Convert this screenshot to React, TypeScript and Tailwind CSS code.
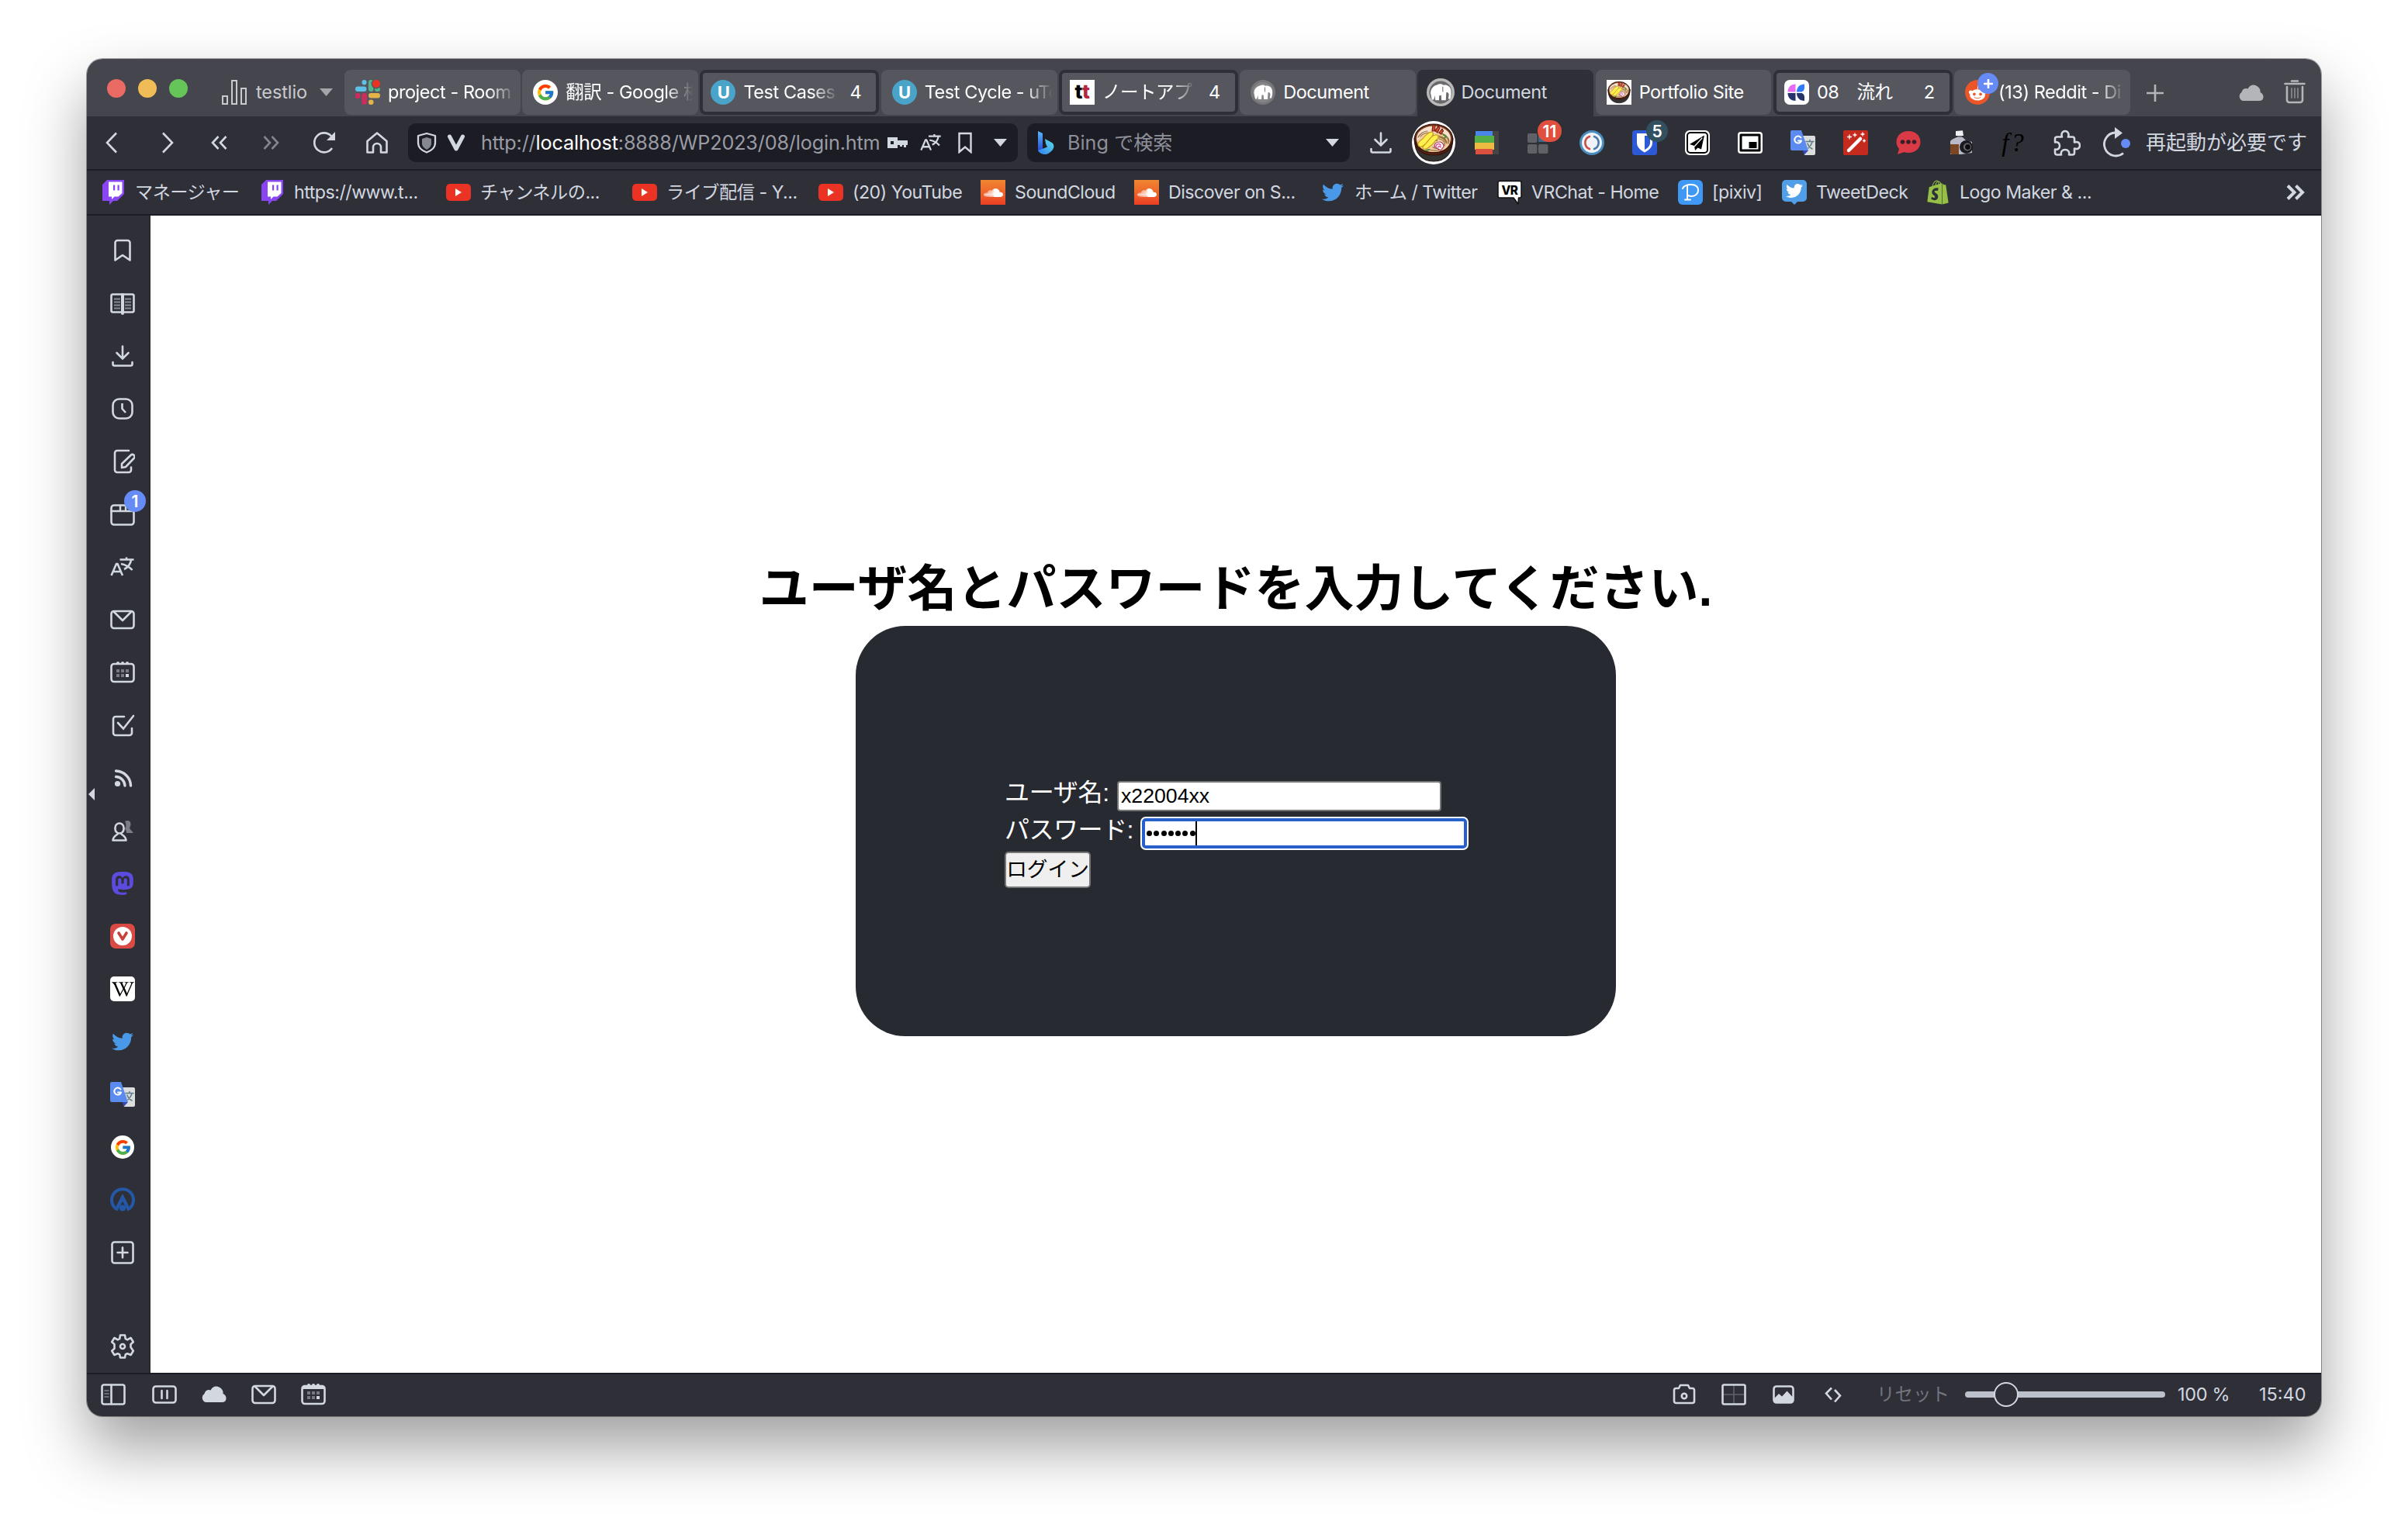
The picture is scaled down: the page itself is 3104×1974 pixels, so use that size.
import React from 'react';
import { FaTwitch, FaYoutube, FaSoundcloud, FaTwitter, FaMastodon, FaShopify, FaRedditAlien, FaWikipediaW } from 'react-icons/fa';
import { FcGoogle } from 'react-icons/fc';

type P = { children?: React.ReactNode; className?: string; box?: string };

const Svg = ({ children, className = 'size-8', box = '0 0 32 32' }: P) => (
  <svg viewBox={box} className={'block shrink-0 ' + className} fill="none" stroke="currentColor" strokeWidth="2.6" strokeLinejoin="round" strokeLinecap="round">
    {children}
  </svg>
);

/* ---------- favicons ---------- */
const Slack = () => (
  <Svg>
    <g stroke="none">
      <rect x="8.5" y="0" width="6" height="6.5" rx="3" fill="#5fc0e8" />
      <rect x="0" y="8.5" width="14.5" height="6.5" rx="3.2" fill="#5fc0e8" />
      <rect x="17" y="0" width="6.5" height="15" rx="3.2" fill="#4fb58a" />
      <rect x="25" y="9" width="7" height="6" rx="3" fill="#4fb58a" />
      <rect x="0" y="17" width="6.5" height="7" rx="3" fill="#cf2c5e" />
      <rect x="8.5" y="17" width="6.5" height="15" rx="3.2" fill="#cf2c5e" />
      <rect x="17" y="17" width="15" height="6.5" rx="3.2" fill="#e3b34a" />
      <rect x="17" y="25.5" width="6.5" height="6.5" rx="3" fill="#e3b34a" />
      <circle cx="27" cy="5" r="6.4" fill="#55565e" />
      <circle cx="27" cy="5" r="5" fill="#ea3323" />
    </g>
  </Svg>
);
const Google = ({ className = 'size-8' }: P) => (
  <span className={'flex shrink-0 items-center justify-center rounded-full bg-white ' + className}>
    <FcGoogle className="size-[76%]" />
  </span>
);
const UTest = () => (
  <span className="flex size-8 shrink-0 items-center justify-center rounded-full bg-[#4aa3c8] text-[22px] leading-none font-bold text-white">U</span>
);
const Tt = () => (
  <span className="flex size-8 shrink-0 items-center justify-center bg-white pb-0.5 text-[26px] leading-none font-extrabold text-black">
    t<span className="text-[#b3263c]">t</span>
  </span>
);
const Elephant = ({ active = false }: { active?: boolean }) => (
  <Svg className={active ? 'size-9 -ml-0.5 -mr-0.5' : 'size-8'}>
    <g stroke="none">
      <circle cx="16" cy="16" r="16" fill={active ? '#b9b9b9' : '#77777a'} />
      <circle cx="16" cy="16" r="13" fill={active ? '#6a6a6c' : '#858587'} />
      <path fill="#fff" d="M4.500 17c0-5 3-8.500 7.500-9.500 2-1.500 5-1.500 7 .2 4-1 8 1.300 8.800 5.300.6 3 .4 7-.8 10.500h-2.200l.7-5.500-1.500-2-1.500.3-.5 8.700h-5l-.3-5.500h-2.200l-.4 5.500H10l-.7-5.500-1 5H6z" />
      <path fill="#77777a" d="M18 9.500h1v6h-1z" />
    </g>
  </Svg>
);
const Bowl = ({ className = 'size-8' }: P) => (
  <Svg box="0 0 56 56" className={className}>
    <g strokeWidth="1.200">
      <path d="M3.500 24c0 17 9 28 24.500 28s24.500-11 24.500-28z" fill="#333332" stroke="#241a17" />
      <path d="M3 22c0 14 10 22 25 22s25-8 25-22z" fill="#5a2413" stroke="#34130a" />
      <ellipse cx="28" cy="22.500" rx="24.500" ry="18.500" fill="#5a2413" stroke="#34130a" />
      <ellipse cx="28" cy="22.500" rx="22.500" ry="16.500" fill="#f6e3cf" stroke="#8a4c2b" />
      <path d="M7 27c1 7 9 13 21 13s20-6 21-13c-2-8-10-12-21-12S9 19 7 27z" fill="#f0cf9f" stroke="none" />
      <path d="M34 15c8 1 13 5 14 11M34 19c6 1 11 5 11 10M37 16c7 3 11 8 10 13M8 21c2-4 7-8 12-8M35 23c5 1 8 4 7 9M30 22c5-3 12 0 14 6M23 37c5 2 12 1 16-1M27 34c2 1 4 2 6 1M11 20c3-4 8-5 12-5" stroke="#9a6c3c" />
      <path d="M22 16c2-1 3 2 5 2M41 18l3 2-2 2M29 24l3 1M22 37l-4 1" stroke="#4f8a35" strokeWidth="2" />
      <path d="M26 13l1-8 3 1-.5 7zM30 13l4-7 2 3-3 6zM35 15l4-5 1.500 3-3 4z" fill="#d4492f" stroke="#7c2313" />
      <path d="M8 31c-1-4 3-6 6-8 3-4 6-8 11-9 3 0 3 4 0 7-3 4-5 7-9 10-3 3-7 3-8 0z" fill="#fff04d" stroke="#c9991f" />
      <path d="M14 35c-1-3 3-4 5-7 3-4 6-9 11-10 4-1 6 3 2 6-3 2-4 6-8 8-3 3-8 6-10 3z" fill="#fff04d" stroke="#c9991f" />
      <path d="M29 33c0-4 3-6 7-6 3 0 5 3 5 6l-4 5z" fill="#fff" stroke="#9c3d66" />
      <path d="M31 33c0-3 4-5 6-2M34 34c0-2 3-2 3 0" stroke="#e0569c" strokeWidth="1.600" />
    </g>
  </Svg>
);
const ClickUp = () => (
  <Svg>
    <g stroke="none">
      <rect width="32" height="32" rx="7" fill="#fff" />
      <path d="M14.500 5.500v10H4.500c0-6 4-10 10-10z" fill="#e76bf3" />
      <path d="M4.500 17h10v10c-6 0-10-4-10-10z" fill="#27346b" />
      <path d="M16 15.500c0-6 4-10 10-10v4.500c0 3-2 5.500-4.500 5.500z" fill="#2f7cf6" />
      <path d="M16 17h5.500c3 0 4.500 2.500 4.500 5.500V27c-6 0-10-4-10-10z" fill="#27346b" />
    </g>
  </Svg>
);
const Reddit = () => (
  <span className="relative flex size-8 shrink-0 items-center justify-center rounded-full bg-[#eb5528]">
    <FaRedditAlien className="size-6 text-white" />
    <span className="absolute -top-[9px] left-4 flex size-[27px] items-center justify-center rounded-full bg-[#668bf5] text-white">
      <Svg className="size-3" box="0 0 12 12"><path d="M6 1v10M1 6h10" /></Svg>
    </span>
  </span>
);

/* ---------- bookmark icons ---------- */
const Twitch = () => (
  <Svg>
    <g stroke="none">
      <path d="M8 0h22v18l-9 9h-5l-5 5v-5H2V6z" fill="#8a46f5" />
      <path d="M10 2.500h17.500V17l-5 4.500h-5L14 25v-3.500h-4z" fill="#fff" />
      <path d="M16 6.500h2.200v7H16zM21.500 6.500h2.200v7h-2.200z" fill="#8a46f5" />
    </g>
  </Svg>
);
const YouTube = () => (
  <span className="flex h-[22px] w-8 shrink-0 items-center justify-center rounded-[5px] bg-[#ea3323]">
    <Svg className="h-2.5 w-2" box="0 0 8 10"><path d="M0 0l8 5-8 5z" fill="#fff" stroke="none" /></Svg>
  </span>
);
const SoundCloud = () => (
  <span className="flex size-8 shrink-0 items-center justify-center bg-gradient-to-b from-[#ef8632] to-[#eb3d24]">
    <FaSoundcloud className="size-[25px] text-white" />
  </span>
);
const VR = () => (
  <Svg>
    <path d="M3 1.500h26a2 2 0 0 1 2 2V21a2 2 0 0 1-2 2h-1.500l-.5 8-6-8H3a2 2 0 0 1-2-2V3.500a2 2 0 0 1 2-2z" fill="#fff" stroke="#111" strokeWidth="1.500" />
    <text x="16" y="18.500" textAnchor="middle" fontSize="16" fontWeight="800" fill="#000" stroke="none" textLength="21" lengthAdjust="spacingAndGlyphs">VR</text>
  </Svg>
);
const Pixiv = () => (
  <Svg>
    <rect width="32" height="32" rx="6" fill="#4098f5" stroke="none" />
    <path d="M6 11c2-4 7-5 11-5 6 0 9 3 9 7.500S22 21 17 21c-2 0-3-.5-4-1M12 8v17M9 25.500h7" stroke="#fff" strokeWidth="2" />
  </Svg>
);
const TweetDeck = () => (
  <span className="flex shrink-0 flex-col items-center">
    <span className="flex h-7 w-8 items-center justify-center rounded-[5px] bg-[#509fe8]"><FaTwitter className="size-[22px] text-white" /></span>
    <Svg className="h-1 w-2" box="0 0 8 4"><path d="M0 0h8L4 4z" fill="#509fe8" stroke="none" /></Svg>
  </span>
);

/* ---------- shared glyphs ---------- */
const Down = ({ className = '' }: P) => (
  <Svg className={'h-2.5 w-[17px] ' + className} box="0 0 17 10"><path d="M0 0h17L8.500 10z" fill="currentColor" stroke="none" /></Svg>
);
const TranslateGlyph = ({ className = 'size-8' }: P) => (
  <Svg className={className}><path d="M1.500 27L8 12h1.500L16 27M4 22h9.500M12.500 6.500h18M21 3.500v3M14 12c6 1 12 5 14.500 8M27 7c-1 6-5 10-9 12" strokeLinecap="butt" /></Svg>
);
const GTranslate = () => (
  <Svg>
    <g stroke="none">
      <path d="M14 7h16a2 2 0 0 1 2 2v21a2 2 0 0 1-2 2H18z" fill="#dcdddd" />
      <path d="M16 26h7l-5.500 6z" fill="#3649b8" />
      <path d="M2 0h12l9 26H2a2 2 0 0 1-2-2V2a2 2 0 0 1 2-2z" fill="#5b8bee" />
    </g>
    <path d="M13.500 9.500a4.500 4.500 0 1 0 .6 4H10" stroke="#fff" strokeWidth="2" />
    <path d="M20 14.500h10M25 12.500v2M28 15c-1 4-3 6-5 8M22 17c1 3 4 6 6 7" stroke="#607d8b" strokeWidth="1.600" />
  </Svg>
);
const Mail = () => <Svg><rect x="1.500" y="5" width="29" height="22" rx="3.500" /><path d="M5 6l11 11L27 6" /></Svg>;
const Calendar = ({ solid = false }: { solid?: boolean }) => (
  <Svg>
    <rect x="1.500" y="5" width="29" height="23" rx="3.500" />
    <g stroke="none" fill="currentColor">
      <circle cx="10" cy="4" r="2" /><circle cx="16" cy="4" r="2" /><circle cx="22" cy="4" r="2" />
      {solid && <rect x="2" y="5" width="28" height="4" />}
      <g opacity=".45"><path d="M8 12h4v4H8zM14 12h4v4h-4zM20 12h4v4h-4zM8 18h4v4H8zM14 18h4v4h-4z" /></g>
      <path d="M20 18h4v4h-4z" />
    </g>
  </Svg>
);
const Cloud = ({ className = 'size-8' }: P) => (
  <Svg className={className}><path d="M6 26a6 6 0 0 1-2.500-11c1-4.500 5-6 8-4.500C14 5 19 4.500 22.500 6.500c4 2 5.500 5 5 8.500C33 17 33 25.500 27 26z" fill="currentColor" stroke="none" /></Svg>
);
const DownloadGlyph = () => <Svg><path d="M16 3.500v15M8.500 12l7.500 7.500 7.500-7.500" strokeLinejoin="miter" /><path d="M3.500 24v2.500a2 2 0 0 0 2 2h21a2 2 0 0 0 2-2V24" /></Svg>;

/* ---------- tab strip ---------- */
type TabT = { icon: React.ReactNode; label: string; count?: string; active?: boolean; fade?: boolean; tight?: boolean };
const tabs: TabT[] = [
  { icon: <Slack />, label: 'project - Room', fade: true },
  { icon: <Google />, label: '翻訳 - Google 検', fade: true },
  { icon: <UTest />, label: 'Test Cases', count: '4', fade: true },
  { icon: <UTest />, label: 'Test Cycle - uTe', fade: true },
  { icon: <Tt />, label: 'ノートアプ', count: '4', fade: true },
  { icon: <Elephant />, label: 'Document' },
  { icon: <Elephant active />, label: 'Document', active: true },
  { icon: <Bowl className="size-8 bg-white" />, label: 'Portfolio Site' },
  { icon: <ClickUp />, label: '08　流れ', count: '2' },
  { icon: <Reddit />, label: '(13) Reddit - Di', fade: true, tight: true },
];

const Tab = ({ icon, label, count, active, fade, tight }: TabT) => (
  <div
    className={
      'flex min-w-0 flex-1 items-center ' +
      (active
        ? 'h-[60px] rounded-t-lg bg-[#2e2f37] pb-0.5 pl-3.5 text-[#d2d7e0]'
        : count
          ? 'h-[58px] rounded-lg border-4 border-[#2e2f37] bg-[#55565e] pl-2.5 text-white'
          : 'h-[58px] rounded-lg bg-[#55565e] pl-3.5 text-white')
    }
  >
    {icon}
    <span
      className={
        'min-w-0 flex-1 overflow-hidden leading-8 whitespace-nowrap ' +
        (tight ? 'ml-[11px] mr-1.5 ' : count ? 'ml-2.5 mr-3.5 ' : 'ml-2.5 mr-1.5 ') +
        (fade ? '[mask-image:linear-gradient(to_right,#000_calc(100%-36px),transparent)]' : '')
      }
    >
      {label}
    </span>
    {count && <span className="mr-[19px] leading-8">{count}</span>}
  </div>
);

const TitleBar = () => (
  <div className="flex h-[74px] shrink-0 items-start bg-[#45464d] text-[23.500px] tracking-[-0.45px]">
    <div className="flex h-[76px] w-[332px] shrink-0 items-center pl-[26px]">
      <div className="flex gap-4">
        <span className="size-6 rounded-full bg-[#e96b63]" />
        <span className="size-6 rounded-full bg-[#efbc57]" />
        <span className="size-6 rounded-full bg-[#66c559]" />
      </div>
      <div className="mt-2.5 flex items-center pl-11 text-[#c9cacd]">
        <Svg className="h-8 w-[34px]" box="0 0 34 32">
          <path d="M1 21h6v10H1zM13 1h6v30h-6zM25 11h6v20h-6z" strokeWidth="2" strokeLinejoin="miter" />
        </Svg>
        <span className="ml-2.5 w-[82px] leading-8 tracking-[-0.1px]">testlio</span>
        <Down className="text-[#a4a5a9]" />
      </div>
    </div>
    <div className="flex w-[2302px] shrink-0 gap-[2.400px] pt-3.5">
      {tabs.map((t, i) => <Tab key={i} {...t} />)}
    </div>
    <div className="flex h-[88px] flex-1 items-center pl-[18px] text-[#b4b5b8]">
      <Svg className="size-7" box="0 0 28 28"><path d="M14 3v22M3 14h22" strokeLinecap="butt" /></Svg>
      <Cloud className="ml-[94px] size-8" />
      <Svg className="mt-[-4px] ml-6 size-8">
        <path d="M3.500 6h25M12 2.500h8M6 10v17a3 3 0 0 0 3 3h14a3 3 0 0 0 3-3V10" />
        <path d="M12 12v12M16 12v12M20 12v12" strokeWidth="2" opacity=".5" />
      </Svg>
    </div>
  </div>
);

/* ---------- address bar ---------- */
const Slot = ({ children, className = '' }: P) => <div className={'relative flex w-[68px] shrink-0 items-center justify-center ' + className}>{children}</div>;

const Extensions = () => (
  <>
    <Slot><DownloadGlyph /></Slot>
    <Slot><span className="flex size-14 items-center justify-center overflow-hidden rounded-full bg-white"><Bowl className="size-[56px]" /></span></Slot>
    <Slot>
      <Svg><g stroke="none"><path d="M22 1h10v30H22z" fill="#444" /><path d="M2 1h22v8H2z" fill="#4a86ea" /><path d="M1 7h25v9H1z" fill="#55ad48" /><path d="M1 16h25v9H1z" fill="#eebb42" /><path d="M2 24h22v7H2z" fill="#dc5040" /></g></Svg>
    </Slot>
    <Slot>
      <Svg><g stroke="none"><path d="M15 5h13v10H15z" fill="#3c6a86" /><g fill="#606166"><rect x="1" y="4" width="12.500" height="12" rx="2" /><rect x="1" y="18" width="12.500" height="12" rx="2" /><rect x="15" y="18" width="12.500" height="12" rx="2" /></g></g></Svg>
      <span className="absolute -top-[13px] left-8 flex h-7 w-[31px] items-center justify-center rounded-full bg-[#e1503f] text-[21px] leading-none font-semibold text-white">11</span>
    </Slot>
    <Slot>
      <Svg><circle cx="16" cy="16" r="14.500" fill="#eef3f7" stroke="#4a8dbd" strokeWidth="3" /><path d="M13 8a8.500 8.500 0 0 0 0 16" stroke="#cf4b43" /><path d="M19 24a8.500 8.500 0 0 0 0-16" stroke="#4a78a8" /></Svg>
    </Slot>
    <Slot>
      <Svg><rect width="32" height="32" rx="4" fill="#2c5ad6" stroke="none" /><path d="M6 4h20v12c0 6-5 10-10 12.500C11 26 6 22 6 16z" fill="#fff" stroke="none" /><path d="M16 7h7v9c0 4-3 7-7 9z" fill="#2c5ad6" stroke="none" /></Svg>
      <span className="absolute -top-[13px] left-9 flex size-7 items-center justify-center rounded-full bg-[#32505f] text-[21px] leading-none font-semibold text-white">5</span>
    </Slot>
    <Slot>
      <Svg><rect x="1" y="1" width="30" height="30" rx="5" fill="#fff" stroke="#fff" strokeWidth="2" /><rect x="3" y="3" width="26" height="26" rx="4" stroke="#000" strokeWidth="2" /><path d="M25 6.500L6 18l6 2 1 6 3.500-3.500 4.500 2z" fill="#000" stroke="none" /><path d="M12.500 20.500L22 10" stroke="#fff" strokeWidth="1.200" /></Svg>
    </Slot>
    <Slot>
      <Svg><rect x="1" y="3" width="30" height="26" rx="3" fill="#fff" stroke="#fff" strokeWidth="2" /><rect x="4" y="6" width="24" height="20" stroke="#000" strokeWidth="3" /><path d="M14.500 15h10v8h-10z" fill="#000" stroke="none" /></Svg>
    </Slot>
    <Slot><GTranslate /></Slot>
    <Slot>
      <Svg><rect width="32" height="32" rx="2" fill="#c42a1e" stroke="none" /><path d="M7 26L22 11" stroke="#fff" strokeWidth="4.500" /><path d="M8 6v5M5.500 8.500h5M15 4v4M13 6h4M25 3v4M23 5h4M27 12v3M25.500 13.500h3" stroke="#fff" strokeWidth="1.300" /></Svg>
    </Slot>
    <Slot>
      <Svg><path d="M16 1c9 0 15.500 6 15.500 14S25 29 16 29c-2 0-4-.3-5.500-1L2 31l2-7C2 21.500.5 18.500.5 15 .5 7 7 1 16 1z" fill="#d93a45" stroke="none" /><g fill="#3a1f28" stroke="none"><circle cx="8.500" cy="15" r="2.800" /><circle cx="16" cy="15" r="2.800" /><circle cx="23.500" cy="15" r="2.800" /></g></Svg>
    </Slot>
    <Slot>
      <Svg><g stroke="none"><path d="M9 1l9-.8 1 6.800H9z" fill="#f1f1f4" /><path d="M11 7h6v4h-6z" fill="#6b6c78" /><path d="M4 12l6-3h8l4 4 8 2v14l-14 2H2V14z" fill="#b9bac8" /><path d="M2 18h11v13H4a2 2 0 0 1-2-2z" fill="#7c4524" /><circle cx="22.500" cy="21.500" r="8.500" fill="#1b1b1f" /><circle cx="24" cy="21.500" r="5" fill="#6a6b73" /><circle cx="24.500" cy="21.500" r="3.400" fill="#0c0c0e" /></g></Svg>
    </Slot>
    <Slot><span className="font-['Liberation_Serif'] text-[33px] leading-none tracking-[3px] text-black italic">f?</span></Slot>
    <Slot>
      <Svg className="size-9" box="0 0 36 36"><path d="M3 13q0-2.500 2.500-2.500H12c-1.500-4 .5-7.500 4-7.500s5.500 3.500 4 7.500h5.500q2.500 0 2.500 2.500v4.500c4-1.500 7 .5 7 4s-3 5.500-7 4V31q0 2.500-2.500 2.500H21c1-4-1.500-6.500-5-6.500s-6 2.500-5 6.500H5.500Q3 33.500 3 31v-4.500c4 1 6-1.500 6-4.500s-2-5.500-6-4.500z" strokeWidth="2.600" /></Svg>
    </Slot>
  </>
);

const NavBar = () => (
  <div className="flex h-[70px] shrink-0 items-center border-b-2 border-[#1c1c24] bg-[#2e2f37] text-[25.200px] text-[#d2d7e0]">
    <Slot><Svg className="mr-1 size-8"><path d="M22 3.500L10 16l12 12.500" strokeLinejoin="miter" strokeLinecap="butt" /></Svg></Slot>
    <Slot><Svg className="ml-1 size-8"><path d="M10 3.500L22 16 10 28.500" strokeLinejoin="miter" strokeLinecap="butt" /></Svg></Slot>
    <Slot><Svg><path d="M15.500 8L8 16l7.500 8M25.500 8L18 16l7.500 8" strokeLinejoin="miter" strokeLinecap="butt" /></Svg></Slot>
    <Slot className="text-[#83868f]"><Svg><path d="M6.500 8l7.500 8-7.500 8M16.500 8l7.500 8-7.500 8" strokeLinejoin="miter" strokeLinecap="butt" /></Svg></Slot>
    <Slot><Svg><path d="M26 23a12.500 12.500 0 1 1-1-15.500" strokeLinecap="butt" /><path d="M30 2v11H19z" fill="currentColor" stroke="none" /></Svg></Slot>
    <Slot><Svg><path d="M3.500 28.500V14L16 3.500 28.500 14v14.500H21V22a5 5 0 0 0-10 0v6.500z" /></Svg></Slot>

    <div className="ml-1.5 flex h-[50px] w-[786px] shrink-0 items-center rounded-[10px] bg-[#1c1c24] pl-2.5">
      <Svg className="h-7 w-7" box="0 0 28 28"><path d="M14 2l11 3v9c0 6-5 10.500-11 12.500C8 24.500 3 20 3 14V5z" strokeWidth="2.300" /><path d="M14 7l6 2v6c0 4-3 6-6 8-3-2-6-4-6-8V9z" fill="#85878f" stroke="none" /></Svg>
      <Svg className="ml-3 h-6 w-6" box="0 0 24 24"><path d="M3.500 4L12 20 20.500 4" strokeWidth="5" /></Svg>
      <span className="ml-5 w-[520px] overflow-hidden leading-9 tracking-[-0.15px] whitespace-nowrap text-[#9a9ca5]">http://<span className="text-white">localhost</span>:8888/WP2023/08/login.htm</span>
      <Svg className="ml-1 h-4 w-[26px]" box="0 0 26 16"><path d="M0 1h13v4h13v6h-2v3h-3v-3h-2v2h-3v-2h-3v4H0z" fill="currentColor" stroke="none" /><path d="M4 6h4v4H4z" fill="#1c1c24" stroke="none" /></Svg>
      <TranslateGlyph className="ml-4 size-7" />
      <Svg className="ml-[18px] h-7 w-6" box="0 0 24 28"><path d="M4.500 2h15v24L12 19.500 4.500 26z" strokeWidth="2.400" strokeLinejoin="miter" /></Svg>
      <Down className="ml-[25px]" />
    </div>

    <div className="ml-3 flex h-[50px] w-[416px] shrink-0 items-center rounded-[10px] bg-[#1c1c24] pl-3.5">
      <Svg className="h-[30px] w-[21px]" box="0 0 21 30">
        <defs>
          <linearGradient id="bing" x1="0" y1="0" x2="0" y2="1"><stop offset="0" stopColor="#5bb8f7" /><stop offset="1" stopColor="#2446d8" /></linearGradient>
          <linearGradient id="bing2" x1="0" y1="1" x2="1" y2="0"><stop offset="0" stopColor="#2f7df0" /><stop offset="1" stopColor="#5fe0e8" /></linearGradient>
        </defs>
        <path d="M0 0l6 3v20l-3 4-3-2z" fill="url(#bing)" stroke="none" />
        <path d="M9 10l9 5c3 2 3 6 1 9-3 4-8 7-12 6s-6-3-7-5l12-4.500-2-4z" fill="url(#bing2)" stroke="none" />
      </Svg>
      <span className="ml-[17px] flex-1 leading-9 text-[#8d8f98]">Bing で検索</span>
      <Down className="mr-3.5" />
    </div>
    <div className="ml-1.5 flex h-14 shrink-0 items-center"><Extensions /></div>
    <Svg className="ml-2.5 h-10 w-10" box="0 0 40 40">
      <path d="M29 33.500A15 15 0 1 1 18 7" strokeLinecap="butt" strokeWidth="2.800" />
      <path d="M18 0l10 7.500L18 15z" fill="currentColor" stroke="none" />
      <circle cx="32" cy="21" r="6" fill="#668bf5" stroke="none" />
    </Svg>
    <span className="ml-[18px] text-[26px] leading-9 whitespace-nowrap">再起動が必要です</span>
  </div>
);

/* ---------- bookmarks ---------- */
const bookmarks: { icon: React.ReactNode; label: string; w: string }[] = [
  { icon: <Twitch />, label: 'マネージャー', w: 'w-[205px]' },
  { icon: <Twitch />, label: 'https://www.t...', w: 'w-[240px]' },
  { icon: <YouTube />, label: 'チャンネルの...', w: 'w-[240px]' },
  { icon: <YouTube />, label: 'ライブ配信 - Y...', w: 'w-[240px]' },
  { icon: <YouTube />, label: '(20) YouTube', w: 'w-[209px]' },
  { icon: <SoundCloud />, label: 'SoundCloud', w: 'w-[198px]' },
  { icon: <SoundCloud />, label: 'Discover on S...', w: 'w-[240px]' },
  { icon: <FaTwitter className="size-8 shrink-0 p-0.5 text-[#4a99e9]" />, label: 'ホーム / Twitter', w: 'w-[228px]' },
  { icon: <VR />, label: 'VRChat - Home', w: 'w-[233px]' },
  { icon: <Pixiv />, label: '[pixiv]', w: 'w-[134px]' },
  { icon: <TweetDeck />, label: 'TweetDeck', w: 'w-[185px]' },
  { icon: <FaShopify className="size-8 shrink-0 text-[#95bf47]" />, label: 'Logo Maker & ...', w: 'w-[260px]' },
];
const BookmarkBar = () => (
  <div className="flex h-[58px] shrink-0 items-center border-b-2 border-[#1c1c24] bg-[#2e2f37] pl-[18px] text-[23.200px] tracking-[-0.5px] text-[#d2d7e0]">
    {bookmarks.map((b, i) => (
      <div key={i} className={'flex shrink-0 items-center gap-3 whitespace-nowrap ' + b.w}>
        {b.icon}
        <span className="leading-8">{b.label}</span>
      </div>
    ))}
    <Svg className="mr-[19px] ml-auto size-7" box="0 0 28 28"><path d="M4 5.500l8.500 8.500L4 22.500M14.500 5.500L23 14l-8.500 8.500" strokeWidth="4" strokeLinejoin="miter" strokeLinecap="butt" /></Svg>
  </div>
);

/* ---------- side panel ---------- */
const panelItems: React.ReactNode[] = [
  <Svg><path d="M6.500 28.500V6a3 3 0 0 1 3-3h13a3 3 0 0 1 3 3v22.500L16 22z" /></Svg>,
  <Svg><rect x="1.500" y="4.500" width="29" height="23" rx="2" /><path d="M16 5v24" strokeWidth="4" /><path d="M5 10.500h8M5 14.500h8M5 18.500h8M5 22.500h8M19 10.500h8M19 14.500h8M19 18.500h8M19 22.500h8" strokeWidth="1.800" strokeLinecap="butt" opacity=".55" /></Svg>,
  <DownloadGlyph />,
  <Svg><rect x="3.500" y="3.500" width="25" height="25" rx="8" /><path d="M15.500 9v7l4.500 5" strokeLinecap="butt" /></Svg>,
  <Svg><path d="M24 3.500H9a3 3 0 0 0-3 3v22a3 3 0 0 0 3 3h15a3 3 0 0 0 3-3V25" transform="translate(0 -1.500)" /><path d="M15 24v-5L27 7.500c2-2 6 1.500 4 4L20 23z" /></Svg>,
  <Svg><path d="M1.500 12h29M13 5v7M20 5v7" strokeWidth="2.400" /><rect x="1.500" y="4.500" width="29" height="25" rx="3.500" /></Svg>,
  <TranslateGlyph />,
  <Mail />,
  <Calendar />,
  <Svg><path d="M18 5H7a3 3 0 0 0-3 3v18a3 3 0 0 0 3 3h18a3 3 0 0 0 3-3v-6" /><path d="M10 13l7 7.500L30 4" strokeLinejoin="miter" /></Svg>,
  <Svg><circle cx="9.500" cy="23.500" r="3.600" fill="currentColor" stroke="none" /><path d="M7.500 14.500a12 12 0 0 1 11.500 11.500M7.500 7a19.500 19.500 0 0 1 19 19" strokeWidth="3.400" /></Svg>,
  <Svg><path d="M19 4c5-3 9 1 7 6l-1 3 5 6H21c0-3-1-4-2-5 2-4 2-7 0-10z" fill="#7b7d85" stroke="none" /><rect x="6.500" y="6.500" width="11" height="13" rx="5.500" /><path d="M3.500 28.500c0-3.500 3-6 6-8M20.500 28.500c0-3.500-3-6-6-8M3.500 28.500h17" /></Svg>,
  <FaMastodon className="size-[34px] text-[#5b4bdf]" />,
  <span className="flex size-8 items-center justify-center rounded-[7px] bg-[#da4a44]"><span className="flex size-6 items-center justify-center rounded-full bg-white text-[#c8403a]"><Svg className="size-4" box="0 0 16 16"><path d="M3 4l5 8 5-8" strokeWidth="3.600" /></Svg></span></span>,
  <span className="flex size-8 items-center justify-center rounded-[5px] bg-white"><FaWikipediaW className="size-[29px] text-black" /></span>,
  <FaTwitter className="size-7 text-[#4a99e9]" />,
  <GTranslate />,
  <Google className="size-[30px]" />,
  <Svg className="size-8 text-[#2458a6]"><path d="M7 27A14 14 0 1 1 25 27" strokeWidth="4" strokeLinecap="butt" /><path d="M7.500 29.500L16 13l8.500 16.500" strokeWidth="4.500" strokeLinecap="butt" strokeLinejoin="miter" /><circle cx="16" cy="26.500" r="4" fill="currentColor" stroke="none" /></Svg>,
  <Svg><rect x="2.500" y="2.500" width="27" height="27" rx="3" /><path d="M16 9.500v13M9.500 16h13" /></Svg>,
];

const gearPath = 'M13 1.500h6l.8 4.700 2.400 1.200L26.600 5l3.200 5.200-3.300 3v3.800l3.300 4.800-3.200 5.200-4.400-1.800-2.400 1.200-.8 4.100h-6l-.8-4.100-2.400-1.200L5.400 27l-3.200-5.200 3.300-3v-5.600l-3.300-3L5.400 5l4.400 2.400 2.400-1.200z';

const SidePanel = () => (
  <div className="relative flex w-[82px] shrink-0 flex-col items-center border-r-2 border-[#2a2a2d] bg-[#2e2f37] pt-[11px] pl-3 text-[#d2d7e0]">
    {panelItems.map((n, i) => (
      <div key={i} className="relative flex h-[68px] w-full shrink-0 items-center justify-center">
        {n}
        {i === 5 && <span className="absolute top-[3px] right-1 flex size-7 items-center justify-center rounded-full bg-[#668bf5] text-[21px] leading-none font-semibold text-white">1</span>}
      </div>
    ))}
    <div className="mt-auto mb-[18px]"><Svg><path d={gearPath} /><circle cx="16" cy="16" r="3" /></Svg></div>
    <Svg className="absolute top-[738px] left-0.5 h-4 w-2" box="0 0 8 16"><path d="M8 0v16L0 8z" fill="currentColor" stroke="none" /></Svg>
  </div>
);

/* ---------- page ---------- */
const LoginPage = () => (
  <div className="flex flex-1 flex-col items-center bg-white pt-[433px] font-['Liberation_Sans','Noto_Sans_CJK_JP',sans-serif]">
    <h1 className="h-24 text-[64px] leading-[96px] font-bold whitespace-nowrap text-black">ユーザ名とパスワードを入力してください.</h1>
    <form className="flex h-[529px] w-[980px] flex-col items-start rounded-[64px] bg-[#272a31] pt-[191px] pl-48 text-[32px] text-white">
      <div className="flex h-12 items-center">
        <label className="w-[145px] leading-[48px] tracking-[-0.3px]">ユーザ名:</label>
        <div className="mt-[9px] flex h-[39px] w-[418px] items-center rounded-[4px] border-2 border-[#767676] bg-white pl-[3px] text-[26.667px] leading-none text-black">x22004xx</div>
      </div>
      <div className="flex h-12 items-center">
        <label className="w-[175px] leading-[48px] tracking-[-0.5px]">パスワード:</label>
        <div className="mt-[9px] flex h-[43px] w-[423px] items-center rounded-[7px] border-2 border-white bg-white">
          <div className="flex h-full w-full items-center rounded-[5px] border-4 border-[#2860cb] pl-0.5">
            <div className="flex gap-[2.300px]">
              {[0, 1, 2, 3, 4, 5, 6].map((i) => <span key={i} className="size-[7px] rounded-full bg-black" />)}
            </div>
            <span className="h-[31px] w-0.5 bg-black" />
          </div>
        </div>
      </div>
      <button type="button" className="mt-1 flex h-[47px] w-[111px] items-center justify-center rounded-[5px] border-2 border-[#767676] bg-[#efefef] text-[26.667px] leading-none whitespace-nowrap text-black">ログイン</button>
    </form>
  </div>
);

/* ---------- status bar ---------- */
const StatusBar = () => (
  <div className="flex h-14 shrink-0 items-center border-t-2 border-[#1c1c24] bg-[#2e2f37] pr-[18px] pb-0.5 pl-[18px] text-[23.500px] text-[#d2d7e0]">
    <Svg><rect x="1.500" y="3.500" width="29" height="25" rx="2.500" /><path d="M13.500 4v24" /><path d="M5 11h5M5 15h5M5 19h5" strokeWidth="1.600" opacity=".5" /></Svg>
    <Svg className="ml-[34px] size-8"><rect x="1.500" y="5.500" width="29" height="21" rx="3.500" /><path d="M12.500 11v10M19.500 11v10" /></Svg>
    <Cloud className="ml-8 size-8" />
    <span className="ml-8"><Mail /></span>
    <span className="ml-8"><Calendar solid /></span>
    <div className="ml-auto flex items-center">
      <Svg><path d="M3 10.500a2.500 2.500 0 0 1 2.500-2.500H9l2-4h10l2 4h3.500A2.500 2.500 0 0 1 29 10.500v14a2.500 2.500 0 0 1-2.500 2.500h-21A2.500 2.500 0 0 1 3 24.500z" /><circle cx="16" cy="18" r="3.200" /></Svg>
      <Svg className="ml-8 size-8"><rect x="1.500" y="3.500" width="29" height="25" rx="2" /><path d="M16 5v22M3 16h26" strokeWidth="1.600" opacity=".3" /></Svg>
      <Svg className="ml-8 size-8"><rect x="3.500" y="5.500" width="25" height="21" rx="3.500" /><path d="M4 21l6-6 4 3.500 6.500-7 7.500 8V27H4z" fill="currentColor" stroke="none" /></Svg>
      <Svg className="ml-8 size-8"><path d="M14 7.500L7 14.500l7 8M18 10l7 7.500-7 8" strokeLinecap="butt" strokeLinejoin="miter" /></Svg>
      <span className="ml-10 w-[114px] leading-8 whitespace-nowrap text-[#73757d]">リセット</span>
      <div className="relative flex h-8 w-[258px] items-center">
        <span className="h-2 w-full rounded-full bg-[#bbc0ca]" />
        <span className="absolute left-[37px] size-8 rounded-full border-2 border-[#d2d7e0] bg-[#2e2f37]" />
      </div>
      <span className="ml-4 w-[105px] leading-8 tracking-[-0.3px] whitespace-nowrap">100 %</span>
      <span className="w-[62px] leading-8 whitespace-nowrap">15:40</span>
    </div>
  </div>
);

export default function App() {
  return (
    <div className="h-[1974px] w-[3104px] overflow-hidden bg-white pt-[76px] pl-28 font-['Inter','Noto_Sans_CJK_JP',sans-serif]">
      <div className="flex h-[1750px] w-[2880px] flex-col overflow-hidden rounded-[20px] shadow-[0_40px_80px_rgba(0,0,0,0.38),0_0_0_1px_rgba(0,0,0,0.35)]">
        <TitleBar />
        <NavBar />
        <BookmarkBar />
        <div className="flex min-h-0 flex-1">
          <SidePanel />
          <LoginPage />
        </div>
        <StatusBar />
      </div>
    </div>
  );
}
